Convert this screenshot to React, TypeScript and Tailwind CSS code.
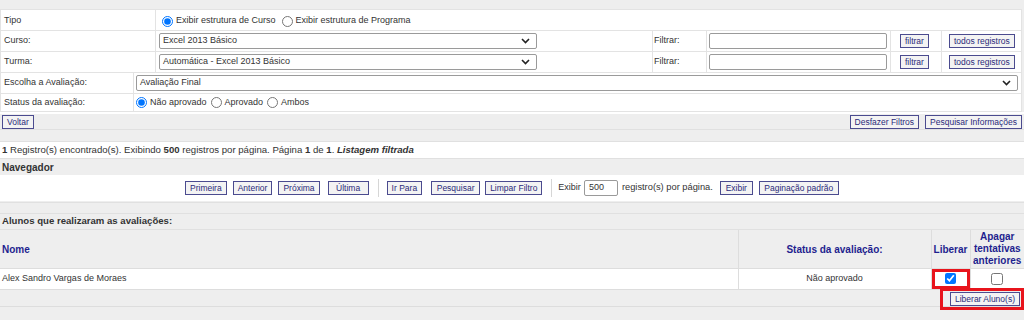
import React from "react";

// tela de liberação de avaliações (layout legado em tabelas)
const Btn = ({ children, className = "" }: { children: React.ReactNode; className?: string }) => (
  <button
    className={`h-[14px] px-[4px] border border-[#4b4b8f] bg-[#f3f3f3] text-[#2a2a7a] text-[8.5px] leading-[12px] font-['Liberation_Sans',sans-serif] whitespace-nowrap ${className}`}
  >
    {children}
  </button>
);

const Chevron = () => (
  <svg width="9" height="6" viewBox="0 0 9 6" className="shrink-0">
    <path d="M1 1 L4.5 4.5 L8 1" fill="none" stroke="#222" strokeWidth="1.6" />
  </svg>
);

const FakeSelect = ({ value, className = "" }: { value: string; className?: string }) => (
  <div
    className={`h-[16px] border border-[#9a9a9a] rounded-[2px] bg-white flex items-center justify-between pl-[3px] pr-[6px] ${className}`}
  >
    <span>{value}</span>
    <Chevron />
  </div>
);

const Radio = ({ checked, label }: { checked?: boolean; label: string }) => (
  <label className="flex items-center gap-[3px]">
    <input type="radio" readOnly checked={!!checked} className="m-0 w-[11px] h-[11px] accent-[#0075ff]" />
    <span>{label}</span>
  </label>
);

const Cell = ({ children, className = "", colSpan }: { children?: React.ReactNode; className?: string; colSpan?: number }) => (
  <td colSpan={colSpan} className={`bg-white px-[3px] py-0 align-middle ${className}`}>
    {children}
  </td>
);

export default function App() {
  return (
    <div className="w-[1024px] h-[320px] overflow-hidden bg-[#eeeeee] text-[#333] text-[9px] font-['Liberation_Sans',sans-serif]">
      <div className="h-[9px]" />

      {/* filtros de curso / turma */}
      <table className="w-[1022px] border-separate border-spacing-[1px] bg-[#e3e3e3]">
        <tbody>
          <tr className="h-[20px]">
            <Cell className="w-[154px] pt-[2px]">Tipo</Cell>
            <Cell colSpan={5} className="pl-[6px] pt-[2px]">
              <div className="flex items-center gap-[6px]">
                <Radio checked label="Exibir estrutura de Curso" />
                <Radio label="Exibir estrutura de Programa" />
              </div>
            </Cell>
          </tr>
          {["Curso:", "Turma:"].map((l, i) => (
            <tr key={l} className="h-[20px]">
              <Cell className="w-[154px]">{l}</Cell>
              <Cell className="w-[496px]">
                <FakeSelect className="w-[378px]" value={i === 0 ? "Excel 2013 Básico" : "Automática - Excel 2013 Básico"} />
              </Cell>
              <Cell className="w-[53px] pl-[1px]">Filtrar:</Cell>
              <Cell className="w-[183px] pl-[2px]">
                <div className="h-[16px] w-[178px] border border-[#9a9a9a] rounded-[2px] bg-white" />
              </Cell>
              <Cell className="w-[50px] pl-[9px]">
                <Btn>filtrar</Btn>
              </Cell>
              <Cell className="pl-[7px]">
                <Btn>todos registros</Btn>
              </Cell>
            </tr>
          ))}
        </tbody>
      </table>

      {/* avaliação */}
      <table className="w-[1022px] border-separate border-spacing-[1px] bg-[#e3e3e3] -mt-[1px]">
        <tbody>
          <tr className="h-[20px]">
            <Cell className="w-[133px]">Escolha a Avaliação:</Cell>
            <Cell className="pl-[2px]">
              <FakeSelect className="w-[882px]" value="Avaliação Final" />
            </Cell>
          </tr>
          <tr className="h-[17px]">
            <Cell className="w-[133px]">Status da avaliação:</Cell>
            <Cell className="pl-[2px]">
              <div className="flex items-center gap-[4px]">
                <Radio checked label="Não aprovado" />
                <Radio label="Aprovado" />
                <Radio label="Ambos" />
              </div>
            </Cell>
          </tr>
        </tbody>
      </table>

      <div className="h-[2px] bg-white" />
      <div className="h-[16px] flex items-center justify-between px-[2px] border-b border-[#e0e0e0]">
        <Btn>Voltar</Btn>
        <div className="flex gap-[6px]">
          <Btn>Desfazer Filtros</Btn>
          <Btn>Pesquisar Informações</Btn>
        </div>
      </div>
      <div className="h-[12px] border-b border-[#e0e0e0]" />

      <div className="h-[16px] bg-white flex items-center px-[2px] text-[9.6px]">
        <span>
          <b>1</b> Registro(s) encontrado(s). Exibindo <b>500</b> registros por página. Página <b>1</b> de <b>1</b>.{" "}
          <b>
            <i>Listagem filtrada</i>
          </b>
        </span>
      </div>

      <div className="h-[17px] flex items-center px-[2px] font-bold text-[10px] border-t border-[#e0e0e0]">Navegador</div>

      <div className="h-[26px] bg-white flex items-center pl-[185px]">
        <Btn>Primeira</Btn>
        <Btn className="ml-[6px]">Anterior</Btn>
        <Btn className="ml-[6px]">Próxima</Btn>
        <Btn className="min-w-[41px] ml-[8px]">Última</Btn>
        <div className="w-px h-[18px] bg-[#d6d6d6] ml-[9px]" />
        <Btn className="ml-[8px]">Ir Para</Btn>
        <Btn className="min-w-[49px] ml-[9px]">Pesquisar</Btn>
        <Btn className="ml-[5px]">Limpar Filtro</Btn>
        <div className="w-px h-[18px] bg-[#d6d6d6] ml-[9px]" />
        <span className="ml-[6px]">Exibir</span>
        <div className="ml-[3px] h-[16px] w-[34px] border border-[#9a9a9a] rounded-[2px] flex items-center pl-[4px]">500</div>
        <span className="ml-[4px] mr-[7px] text-[9.3px]">registro(s) por página.</span>
        <Btn className="min-w-[33px]">Exibir</Btn>
        <Btn className="min-w-[80px] ml-[6px]">Paginação padrão</Btn>
      </div>

      <div className="h-[12px] border-t border-b border-[#e0e0e0] mt-[1px]" />
      <div className="h-[16px] flex items-center px-[2px] font-bold text-[9.6px] border-b border-[#e0e0e0]">
        Alunos que realizaram as avaliações:
      </div>

      {/* lista de alunos */}
      <table className="w-[1024px] border-collapse">
        <tbody>
          <tr className="h-[38px] text-[#1f1f8f] font-bold text-[10px]">
            <td className="px-[2px] pt-[2px] border-r border-[#dddddd]">Nome</td>
            <td className="w-[193px] pt-[2px] text-center border-r border-[#dddddd]">Status da avaliação:</td>
            <td className="w-[39px] pt-[2px] text-center border-r border-[#dddddd]">Liberar</td>
            <td className="w-[54px] text-center leading-[12px]">
              Apagar
              <br />
              tentativas
              <br />
              anteriores
            </td>
          </tr>
          <tr className="h-[21px] bg-white border-t border-[#dddddd]">
            <td className="px-[2px] border-r border-[#dddddd]">Alex Sandro Vargas de Moraes</td>
            <td className="text-center border-r border-[#dddddd]">Não aprovado</td>
            <td className="text-center border-r border-[#dddddd] relative">
              <div className="absolute inset-0 border-[3px] border-[#e8141c]" />
              <input type="checkbox" readOnly checked className="m-0 w-[11px] h-[11px] accent-[#0075ff] align-middle" />
            </td>
            <td className="text-center">
              <input type="checkbox" readOnly checked={false} className="m-0 w-[12px] h-[12px] align-middle" />
            </td>
          </tr>
        </tbody>
      </table>
      <div className="h-[18px] border-t border-b border-[#dddddd] flex justify-end items-center pr-[1px] pt-[1px] relative">
        <div className="absolute right-0 -top-[2px] w-[84px] h-[22px] border-[3px] border-[#e8141c]" />
        <Btn className="mr-[3px]">Liberar Aluno(s)</Btn>
      </div>
    </div>
  );
}
